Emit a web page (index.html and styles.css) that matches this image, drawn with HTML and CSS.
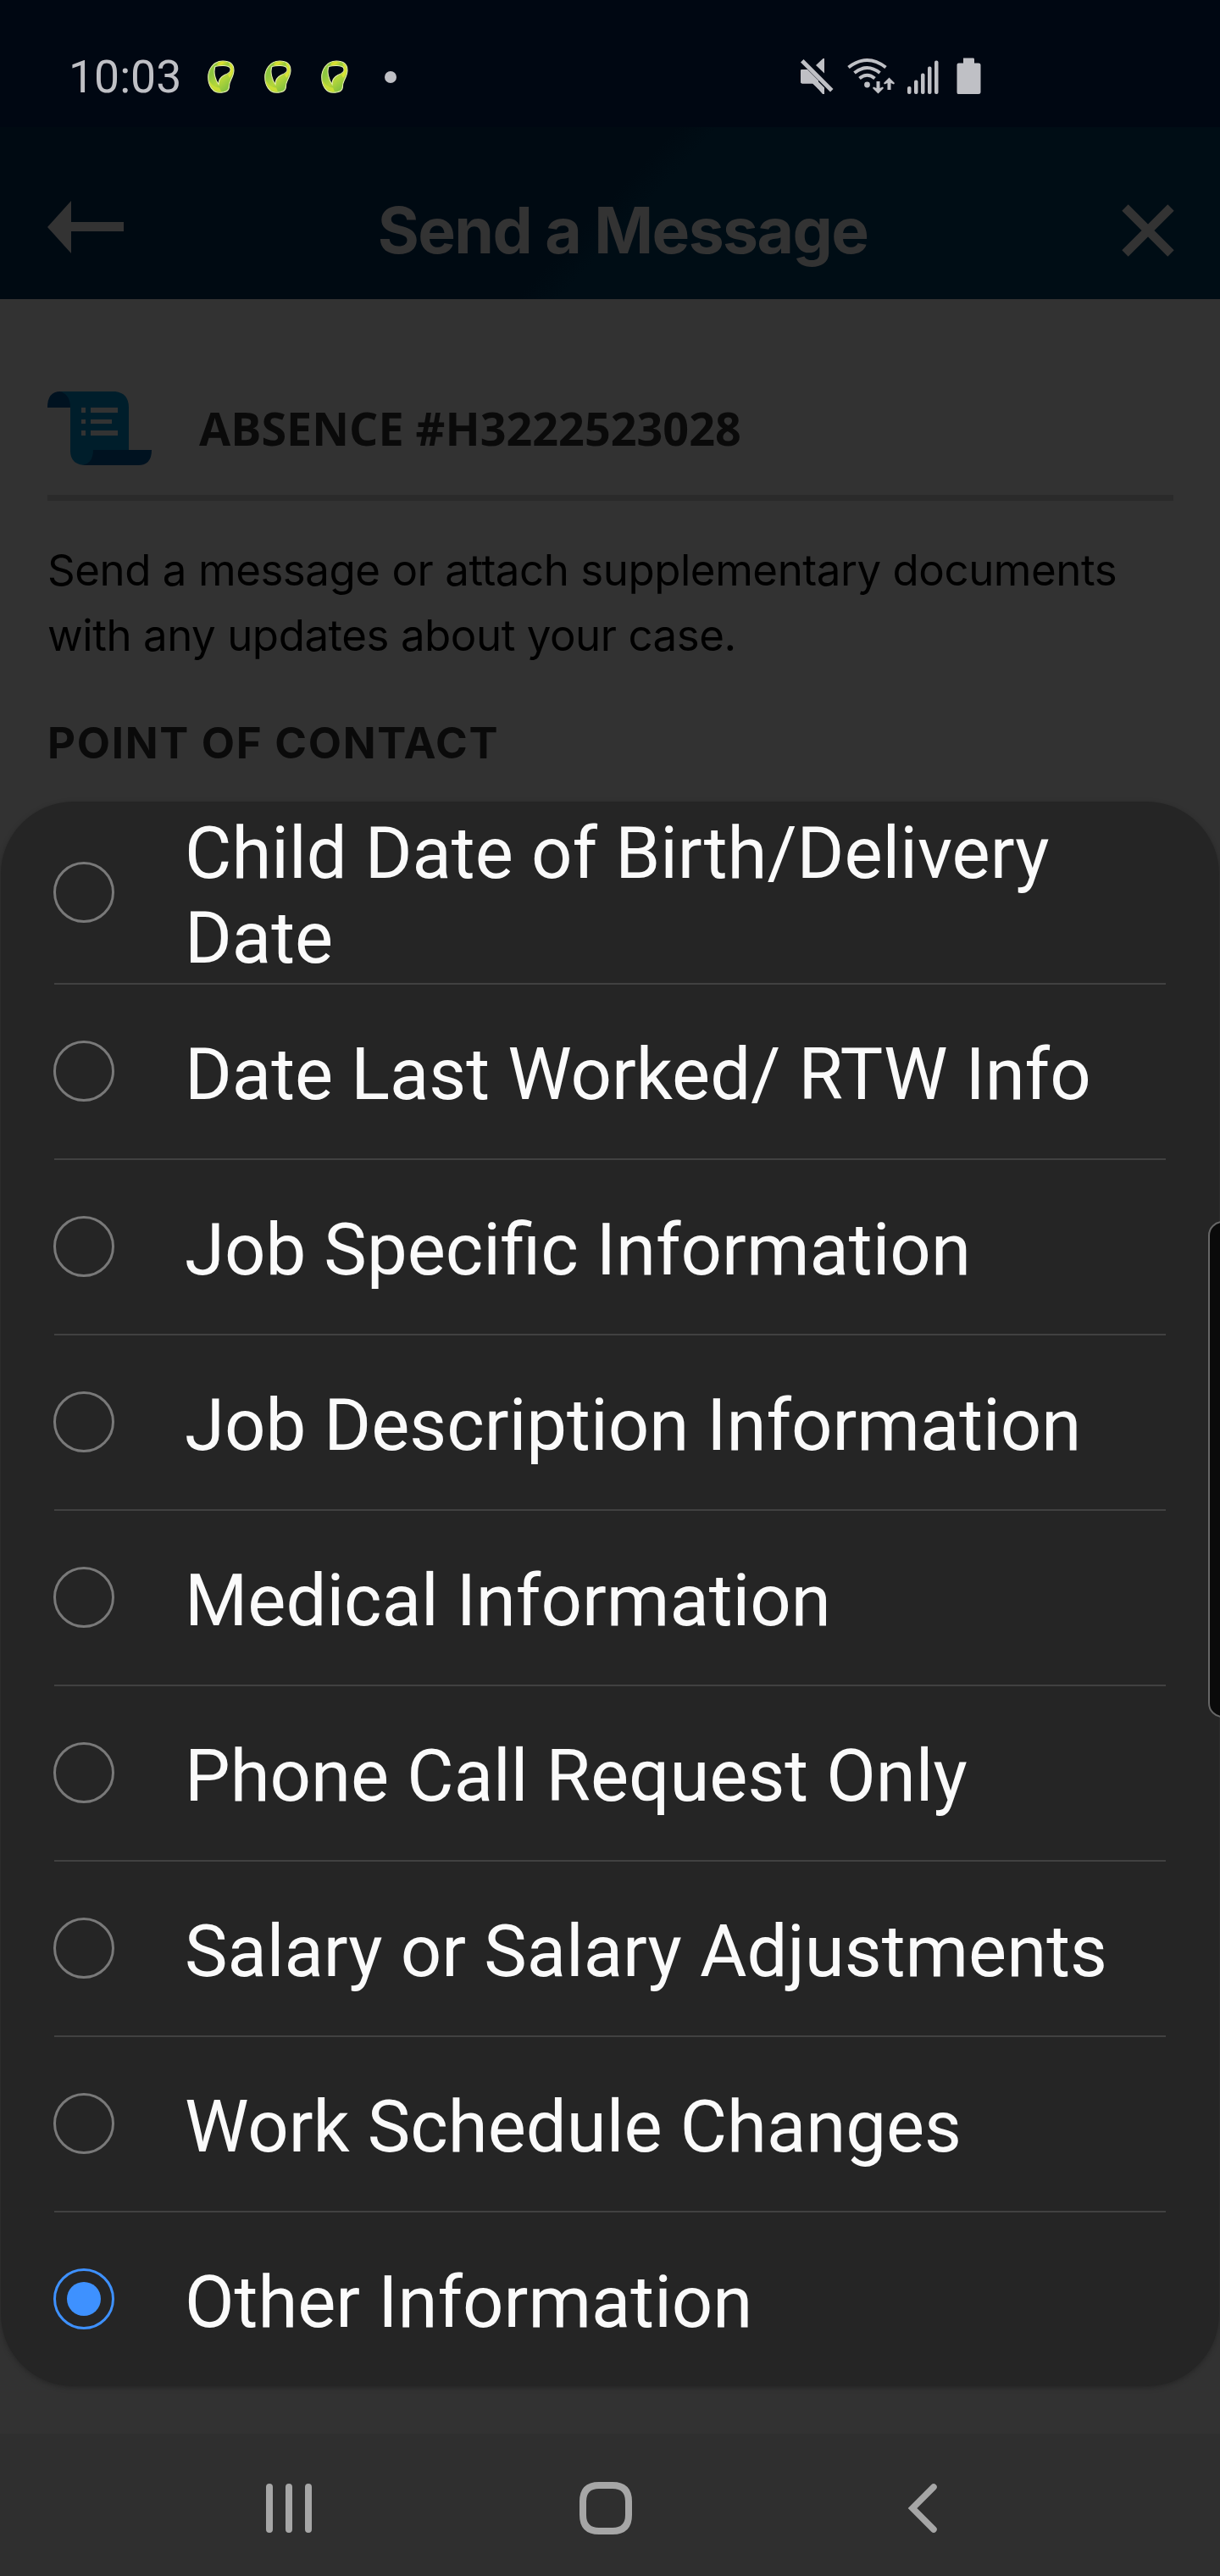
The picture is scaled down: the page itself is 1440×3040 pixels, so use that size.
FILE: index.html
```html
<!DOCTYPE html>
<html lang="en">
<head>
<meta charset="utf-8">
<title>Send a Message</title>
<link rel="stylesheet" href="styles.css">
</head>
<body>
<div class="screen">
  <svg class="defs" width="0" height="0" aria-hidden="true">
    <defs>
      <linearGradient id="loop" x1="0" y1="0" x2="0.7" y2="1">
        <stop offset="0" stop-color="#98c93c"/>
        <stop offset="0.35" stop-color="#8cc63f"/>
        <stop offset="0.65" stop-color="#b5d63a"/>
        <stop offset="1" stop-color="#7dbf3f"/>
      </linearGradient>
      <linearGradient id="fold" x1="0" y1="0" x2="1" y2="0.4">
        <stop offset="0" stop-color="#a9cf38"/>
        <stop offset="0.5" stop-color="#e0e22e"/>
        <stop offset="1" stop-color="#9ccb3b"/>
      </linearGradient>
      <symbol id="notice" viewBox="0 0 32 40">
        <path d="M18 1C6 1 .7 12 .7 20C.7 30 6 38.300 14 38.300C21 38.300 25.500 36 25.500 31C25 25 31 20 31 12C31 4.500 26.500 1 18 1ZM9 7.500C15 6 24 6 26.500 9C28.500 13 25 15.500 20 17.500C15 20 13 23 13 28.500C9 23 6.500 14 9 7.500Z" fill="url(#loop)" fill-rule="evenodd" stroke="#e6efae" stroke-width="1.100"/>
        <path d="M12 2.500C15 1.300 20 1.300 24 2.300L24 6.500C20 5.500 15 5.500 11 6.500Z" fill="url(#fold)"/>
        <path d="M1.500 23C5 30 9 32 14 32.500L16 37.300C8 38 3 32 1.500 23Z" fill="#c9de35"/>
        <path d="M25 3Q30 5 30 12Q29 18 26 21L24 17Q29 13 27 8Z" fill="#d9e435"/>
      </symbol>
    </defs>
  </svg>

  <header class="status-bar">
    <span class="clock">10:03</span>
    <div class="notices">
      <svg class="notice"><use href="#notice"/></svg>
      <svg class="notice"><use href="#notice"/></svg>
      <svg class="notice"><use href="#notice"/></svg>
      <span class="more-dot"></span>
    </div>
    <svg class="system-icons" viewBox="0 0 214 44" fill="#bfc0c5">
      <path d="M19 9L27.500 1H29V18.500ZM2 14H9L29 34V43H27L16 30.500H3Q1 30.500 1 28.500V16Q1 14 2 14Z"/>
      <path d="M4 4L38 38" stroke="#000712" stroke-width="9"/>
      <path d="M4.500 2L39.500 37 36 40.500 1 5.500ZM9 14L22 27V37L15 30.500H3Q1 30.500 1 28.500V16Q1 14 3 14Z"/>
      <g fill="none" stroke="#bfc0c5" stroke-width="4">
        <path d="M57.500 11.500Q79.500-5.500 101.500 11.500M64.500 18Q79.500 6 94.500 18M70.500 24.500Q79.500 17 88.500 24.500"/>
      </g>
      <circle cx="79.500" cy="32" r="3.400"/>
      <path d="M90.500 28H94.500V36L98 34.500 99 36 92.500 42.500 86 36 87 34.500 90.500 36ZM103.500 38H107.500V30L111 31.500 112 30 105.500 23.500 99 30 100 31.500 103.500 30Z"/>
      <rect x="127" y="34" width="4.500" height="9" rx="2"/>
      <rect x="135" y="26.500" width="4.500" height="16.500" rx="2"/>
      <rect x="143" y="18.500" width="4.500" height="24.500" rx="2"/>
      <rect x="151" y="10.500" width="4.500" height="32.500" rx="2"/>
      <rect x="159" y="3.500" width="4.500" height="39.500" rx="2"/>
      <path d="M193 .5H205Q206 .5 206 2V6.500H211Q213.500 6.500 213.500 8.500V41Q213.500 43 211 43H187Q185.500 43 185.500 41V8.500Q185.500 6.500 187.500 6.500H193Z"/>
    </svg>
  </header>

  <div class="app-bar">
    <svg class="back" viewBox="0 0 90 62" fill="#333333"><path d="M0 31L28 0V25H90V36H28V62Z"/></svg>
    <h1 class="title">Send a Message</h1>
    <svg class="close" viewBox="0 0 62 62" stroke="#333333" stroke-width="10.500"><path d="M4 4L58 58M58 4L4 58"/></svg>
  </div>

  <main class="page">
    <div class="case">
      <svg class="scroll-icon" viewBox="0 0 124 88">
        <path d="M15 0H80Q96 2 96 19V70H70L54 87H46Q27 87 27 70V19Z" fill="#001e2b"/>
        <path d="M0 19Q0 0 15 0Q27 4 27 19Z" fill="#001220"/>
        <path d="M42 87Q54 84 54 69H123Q123 87 107 87Z" fill="#001220"/>
        <path d="M40 19h5v6h-5zM51 19h32v6H51zM40 33h5v5h-5zM51 33h25v5H51zM40 46h5v6h-5zM51 46h32v6H51z" fill="#333333"/>
      </svg>
      <h2 class="case-number">ABSENCE #H3222523028</h2>
    </div>
    <p class="intro">Send a message or attach supplementary documents<br>with any updates about your case.</p>
    <h3 class="section">POINT OF CONTACT</h3>
  </main>

  <ul class="options">
    <li class="option first"><span class="radio"></span><span class="label">Child Date of Birth/Delivery<br>Date</span></li>
    <li class="option"><span class="radio"></span><span class="label">Date Last Worked/ RTW Info</span></li>
    <li class="option"><span class="radio"></span><span class="label">Job Specific Information</span></li>
    <li class="option"><span class="radio"></span><span class="label">Job Description Information</span></li>
    <li class="option"><span class="radio"></span><span class="label">Medical Information</span></li>
    <li class="option"><span class="radio"></span><span class="label">Phone Call Request Only</span></li>
    <li class="option"><span class="radio"></span><span class="label">Salary or Salary Adjustments</span></li>
    <li class="option"><span class="radio"></span><span class="label">Work Schedule Changes</span></li>
    <li class="option"><span class="radio selected"></span><span class="label">Other Information</span></li>
  </ul>
  <div class="edge-handle"></div>

  <nav class="nav-bar">
    <svg class="nav-icon" viewBox="0 0 62 62" stroke="#a6a6a6" stroke-width="8" stroke-linecap="round"><path d="M8 6V56M31 6V56M54 6V56"/></svg>
    <svg class="nav-icon" viewBox="0 0 62 62" fill="none" stroke="#a6a6a6" stroke-width="8"><path d="M23 4H39Q58 4 58 23V39Q58 58 39 58H23Q4 58 4 39V23Q4 4 23 4Z"/></svg>
    <svg class="nav-icon" viewBox="0 0 62 62" fill="none" stroke="#a6a6a6" stroke-width="7.500" stroke-linecap="round"><path d="M44 6L19 31 44 56"/></svg>
  </nav>
</div>
</body>
</html>
```
FILE: styles.css
```css
* { box-sizing: border-box; }

body { margin: 0; background: #323232; }

h1, h2, h3, p, ul { margin: 0; padding: 0; }

svg { display: block; flex: none; }

.defs { position: absolute; }

.screen {
  position: relative;
  display: flex;
  flex-direction: column;
  width: 1440px;
  height: 3040px;
  overflow: hidden;
  background: #323232;
}

.status-bar {
  display: flex;
  align-items: center;
  height: 150px;
  padding: 31px 282px 0 81px;
  background: #000712;
}

.clock {
  width: 164px;
  font: 400 53.500px/60px Roboto, sans-serif;
  color: #bfc0c5;
}

.notices { display: flex; align-items: center; gap: 35px; }

.notice { width: 32px; height: 40px; }

.more-dot {
  width: 14px;
  height: 14px;
  margin-left: 8px;
  border-radius: 50%;
  background: #bfc0c5;
}

.system-icons {
  width: 214px;
  height: 44px;
  margin: -2px 0 0 auto;
}

.app-bar {
  display: flex;
  justify-content: space-between;
  height: 203px;
  padding: 87px 54px 0 56px;
  background: linear-gradient(133deg, #000a12 49%, #000d15 52%);
}

.back { width: 90px; height: 62px; }

.title {
  font: 700 75px/90px Inter, sans-serif;
  margin-top: -10px;
  letter-spacing: -1.6px;
  color: #333333;
  white-space: nowrap;
}

.close { width: 62px; height: 62px; margin-top: 4px; }

.page { padding: 109px 55px 0 56px; }

.case {
  display: flex;
  height: 129px;
  border-bottom: 7px solid #2a2a2a;
}

.scroll-icon { width: 124px; height: 88px; }

.case-number {
  margin: 5px 0 0 55px;
  font: 700 53.900px/76px "Open Sans", sans-serif;
  color: #0a0a0a;
  white-space: nowrap;
}

.intro {
  margin-top: 43px;
  font: 400 51px/77px Inter, sans-serif;
  letter-spacing: -0.46px;
  color: #000000;
  white-space: nowrap;
}

.section {
  margin-top: 59px;
  font: 700 51px/60px Inter, sans-serif;
  letter-spacing: 1.7px;
  color: #0a0a0a;
  white-space: nowrap;
}

.options {
  position: absolute;
  top: 946px;
  left: 1px;
  width: 1438px;
  height: 1870px;
  padding: 0 63px;
  border-radius: 86px;
  background: #252525;
  box-shadow: 0 2px 6px rgba(0, 0, 0, 0.25);
  list-style: none;
}

.option {
  display: flex;
  align-items: center;
  height: 207px;
  border-bottom: 2px solid #414141;
}

.option.first { height: 216px; }

.option:last-child { height: 205px; border-bottom: 0; }

.radio {
  display: flex;
  align-items: center;
  justify-content: center;
  width: 72px;
  height: 72px;
  margin: 0 0 1px -1px;
  border: 3px solid #797979;
  border-radius: 50%;
}

.radio.selected { border-color: #3e91ff; }

.radio.selected::after {
  content: "";
  width: 40px;
  height: 40px;
  border-radius: 50%;
  background: #3e91ff;
}

.label {
  margin-left: 83px;
  padding-top: 7px;
  font: 400 85.100px/100px Roboto, sans-serif;
  color: #fafafa;
  white-space: nowrap;
}

.edge-handle {
  position: absolute;
  top: 1441px;
  right: -20px;
  width: 34px;
  height: 586px;
  border: 2px solid #666666;
  border-radius: 20px;
  background: #0a0a0a;
}

.nav-bar {
  display: flex;
  gap: 312px;
  height: 168px;
  margin-top: auto;
  padding: 57px 0 0 310px;
  background: #2f2f2f;
}

.nav-icon { width: 62px; height: 62px; }
```
